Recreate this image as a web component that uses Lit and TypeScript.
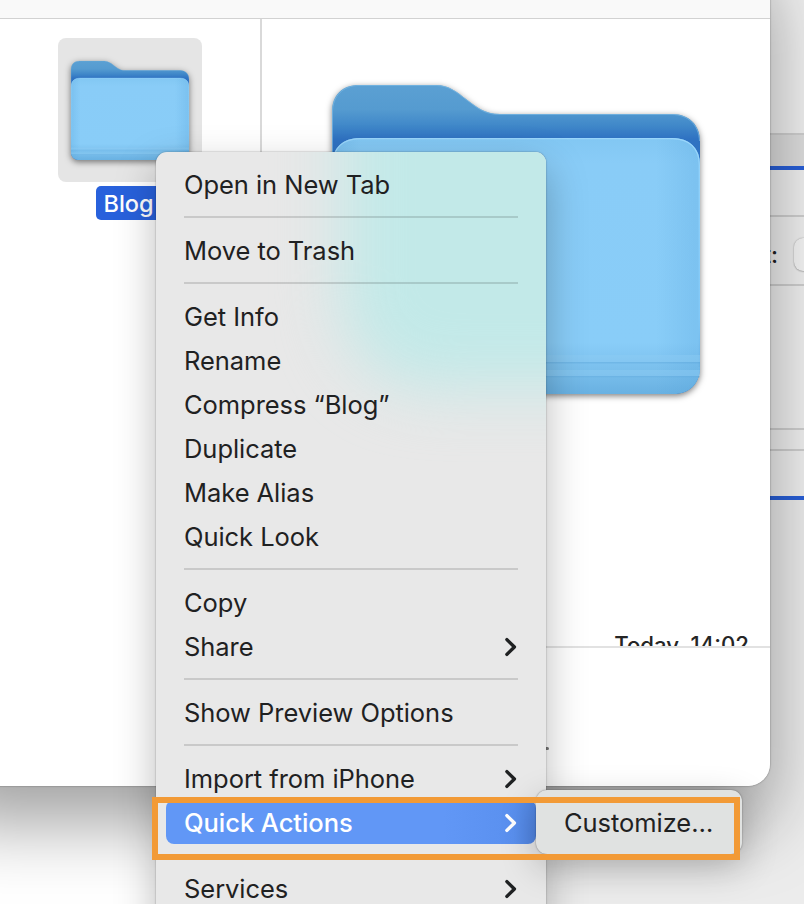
import { LitElement, html, svg, css } from "lit";
import { customElement, property } from "lit/decorators.js";

type Entry = { label: string; sub?: boolean; active?: boolean } | null;

const ENTRIES: Entry[] = [
  { label: "Open in New Tab" },
  null,
  { label: "Move to Trash" },
  null,
  { label: "Get Info" },
  { label: "Rename" },
  { label: "Compress “Blog”" },
  { label: "Duplicate" },
  { label: "Make Alias" },
  { label: "Quick Look" },
  null,
  { label: "Copy" },
  { label: "Share", sub: true },
  null,
  { label: "Show Preview Options" },
  null,
  { label: "Import from iPhone", sub: true },
  { label: "Quick Actions", sub: true, active: true },
  null,
  { label: "Services", sub: true },
];

@customElement("folder-icon")
export class FolderIcon extends LitElement {
  static styles = css`
    :host { display: block; }
    .art { display: block; width: 100%; height: auto; overflow: visible; filter: drop-shadow(0 2px 3px rgba(0, 0, 0, 0.5)); }
  `;
  render() {
    return html`<svg class="art" viewBox="0 0 368 309">
      <defs>
        <linearGradient id="back" x1="0" y1="0" x2="0" y2="54" gradientUnits="userSpaceOnUse">
          <stop offset="0" stop-color="#5ba0d3" />
          <stop offset="0.45" stop-color="#559bd0" />
          <stop offset="0.75" stop-color="#4088c9" />
          <stop offset="1" stop-color="#2f72c2" />
        </linearGradient>
        <linearGradient id="front" x1="0" y1="53" x2="0" y2="309" gradientUnits="userSpaceOnUse">
          <stop offset="0" stop-color="#82c7f3" />
          <stop offset="0.1" stop-color="#89ccf7" />
          <stop offset="0.8" stop-color="#89cdf8" />
          <stop offset="0.9" stop-color="#7bc0ed" />
          <stop offset="1" stop-color="#69b1e2" />
        </linearGradient>
        <linearGradient id="edge" x1="0" y1="0" x2="1" y2="0">
          <stop offset="0" stop-color="#4f9fd8" stop-opacity="0.25" />
          <stop offset="0.08" stop-color="#4f9fd8" stop-opacity="0" />
          <stop offset="0.88" stop-color="#4f9fd8" stop-opacity="0" />
          <stop offset="0.985" stop-color="#4f9fd8" stop-opacity="0.22" />
          <stop offset="1" stop-color="#4f9fd8" stop-opacity="0.22" />
        </linearGradient>
        <linearGradient id="rim" x1="0" y1="53" x2="0" y2="309" gradientUnits="userSpaceOnUse">
          <stop offset="0" stop-color="#9ad6fb" />
          <stop offset="0.7" stop-color="#82c9f8" />
          <stop offset="1" stop-color="#5da5d8" />
        </linearGradient>
      </defs>
      ${svg`
        <path fill="url(#back)" d="M0 27 C0 10 10 0 27 0 H104 C117 0 125 7 134 14 C145 22 152 29 168 29 H340 C357 29 368 40 368 56 V282 C368 299 357 309 341 309 H27 C10 309 0 299 0 282Z" />
        <path fill="none" stroke="#7ab9e4" stroke-width="1" stroke-opacity=".7" d="M.5 120 V27 C.5 11 11 .5 27 .5 H104 C117 .5 125 7.5 134 14.5 C145 22.5 152 29.5 168 29.5 H340 C356 29.5 367 40 367.5 56" />
        <path fill="url(#front)" d="M0 80 C0 63 11 53 28 53 H340 C357 53 368 63 368 80 V282 C368 299 357 309 341 309 H27 C10 309 0 299 0 282Z" />
        <path fill="url(#edge)" d="M0 80 C0 63 11 53 28 53 H340 C357 53 368 63 368 80 V282 C368 299 357 309 341 309 H27 C10 309 0 299 0 282Z" />
        <path fill="none" stroke="url(#rim)" stroke-width="1.2" d="M.7 282 V80 C.7 63 11 53.6 28 53.6 H340 C357 53.6 367.3 63 367.3 80 V282" />
        <rect y="270" width="368" height="7" fill="#8dcdf5" opacity=".45" />
        <rect y="277" width="368" height="1.4" fill="#5da6d9" opacity=".4" />
        <rect y="285" width="368" height="6" fill="#8dcdf5" opacity=".45" />
        <rect y="291" width="368" height="1.4" fill="#5da6d9" opacity=".3" />
      `}
    </svg>`;
  }
}

@customElement("context-menu")
export class ContextMenu extends LitElement {
  @property({ attribute: false }) entries: Entry[] = [];
  static styles = css`
    :host { display: block; padding: 10px; box-sizing: border-box; }
    .row {
      display: flex; align-items: center; justify-content: space-between;
      height: 44px; padding: 2px 18px 0; border-radius: 8px; box-sizing: border-box;
      font-size: 25.5px; font-weight: 440; letter-spacing: -0.05px; line-height: 42px; white-space: nowrap; color: #1f2122;
      position: relative;
    }
    .row.active { background: linear-gradient(90deg, #6197f6 75%, #5a90ef 94%, #5084e0); color: #fff; font-weight: 470; }
    .rule { height: 22px; display: flex; align-items: center; padding: 0 18px; position: relative; }
    .rule::before { content: ""; flex: 1; height: 2px; background: rgba(0, 0, 0, 0.135); }
    .chev { width: 14px; height: 22px; fill: none; stroke: currentColor; stroke-width: 3.4; stroke-linecap: round; stroke-linejoin: round; }
  `;
  render() {
    return this.entries.map((e) =>
      e === null
        ? html`<div class="rule"></div>`
        : html`<div class="row ${e.active ? "active" : ""}">
            <span>${e.label}</span>
            ${e.sub ? html`<svg class="chev" viewBox="0 0 14 22"><path d="M2.9 3.6 L10.4 11 L2.9 18.4" /></svg>` : null}
          </div>`
    );
  }
}

@customElement("app-root")
export class AppRoot extends LitElement {
  static styles = css`
    :host { display: block; font-family: Inter, "Liberation Sans", sans-serif; }
    .desktop {
      position: relative; width: 804px; height: 904px; overflow: hidden;
      background: linear-gradient(90deg, #fff 160px, #ececec 540px);
    }
    .behind { position: absolute; left: 700px; top: 0; width: 104px; display: flex; flex-direction: column; }
    .behind > div { box-sizing: border-box; border-bottom: 2px solid #cfcfcf; background: #f0f0f0; }
    .p1 { height: 135px; }
    .behind > .p2 { height: 35px; background: #dedede; border-bottom: 4px solid #285fd8; }
    .p3 { height: 47px; }
    .p4 { height: 69px; display: flex; align-items: center; padding-left: 65px; gap: 15.5px; font-size: 23px; color: #1f2122; }
    .pop { flex: none; width: 60px; height: 33px; margin-top: 8px; border-radius: 9px; background: #f6f6f6; box-shadow: 0 0 1.5px rgba(0, 0, 0, 0.35), 0 1px 1.5px rgba(0, 0, 0, 0.15); }
    .colon { width: 13px; display: flex; justify-content: flex-end; padding-top: 8px; font-weight: 500; }
    .p5 { height: 144px; }
    .p6 { height: 21px; }
    .behind > .p7 { height: 49px; border-bottom: 4px solid #285fd8; }
    .finder {
      position: absolute; left: -60px; top: -60px; width: 830px; height: 846px; box-sizing: border-box;
      border-radius: 22px; background: #fff; overflow: hidden; padding-left: 60px;
      display: flex; flex-direction: column;
    }
    .cast {
      position: absolute; left: -60px; top: -60px; width: 830px; height: 846px; border-radius: 22px;
      box-shadow: 0 0 1.5px 0 rgba(0, 0, 0, 0.6), 0 38px 72px rgba(0, 0, 0, 0.37);
    }
    .bar { flex: none; height: 79px; margin-left: -60px; box-sizing: border-box; background: #f9f9f9; border-bottom: 1px solid #d2d2d2; }
    .panes { flex: 1; display: flex; }
    .files { width: 260px; box-sizing: content-box; border-right: 2px solid #d9d9d9; }
    .tile { width: 144px; height: 144px; margin: 19px 0 0 58px; box-sizing: border-box; padding: 23px 13px 0 13px; border-radius: 8px; background: #e5e5e5; }
    .name { display: inline-block; margin: 4px 0 0 96px; height: 34px; width: 90px; padding: 1px 0 0 7.5px; box-sizing: border-box; border-radius: 5px; background: #2861dc; color: #fff; font-size: 23.5px; font-weight: 550; line-height: 34px; }
    .preview { flex: 1; display: flex; flex-direction: column; }
    .big { width: 368px; margin: 66px 0 0 70px; }
    .meta { height: 14px; margin-top: 238px; padding-right: 21px; overflow: hidden; text-align: right; font-size: 22.2px; font-weight: 540; line-height: 26px; color: #252525; }
    .foot { flex: 1; border-top: 2px solid #e2e2e2; padding: 82px 0 0 279px; }
    .dot { width: 8px; height: 3px; border-radius: 2px; background: #777; margin-top: 17px; }
    .menu {
      position: absolute; left: 156px; top: 152px; width: 390px; height: 780px; border-radius: 11px; overflow: hidden; background: #e8e8e8;
    }
    .menu-cast {
      position: absolute; left: 156px; top: 152px; width: 390px; height: 780px; border-radius: 11px;
      box-shadow: 0 0 1.5px 0 rgba(0, 0, 0, 0.5), 0 16px 42px rgba(0, 0, 0, 0.27);
    }
    .tint { position: absolute; left: 186px; top: -200px; width: 420px; height: 436px; border-radius: 90px; background: #c2e9e8; filter: blur(31px); }
    .submenu {
      position: absolute; left: 536px; top: 790px; width: 206px; height: 64px; border-radius: 11px; background: #e0e2e1;
      box-shadow: 0 0 1.5px 0 rgba(0, 0, 0, 0.5), 0 12px 36px rgba(0, 0, 0, 0.24);
    }
    .mark { position: absolute; left: 151.5px; top: 797px; width: 588.5px; height: 62.5px; box-sizing: border-box; border: 6px solid #f29a36; }
  `;
  render() {
    return html`<div class="desktop">
      <div class="behind">
        <div class="p1"></div>
        <div class="p2"></div>
        <div class="p3"></div>
        <div class="p4"><span class="colon"><span>t</span><span>:</span></span><span class="pop"></span></div>
        <div class="p5"></div>
        <div class="p6"></div>
        <div class="p7"></div>
      </div>
      <div class="cast"></div>
      <div class="finder">
        <div class="bar"></div>
        <div class="panes">
          <div class="files">
            <div class="tile"><folder-icon></folder-icon></div>
            <div class="name">Blog</div>
          </div>
          <div class="preview">
            <folder-icon class="big"></folder-icon>
            <div class="meta">Today, 14:02</div>
            <div class="foot"><div class="dot"></div></div>
          </div>
        </div>
      </div>
      <div class="menu-cast"></div>
      <div class="menu">
        <div class="tint"></div>
        <context-menu .entries=${ENTRIES}></context-menu>
      </div>
      <div class="submenu"><context-menu .entries=${[{ label: "Customize…" }]}></context-menu></div>
      <div class="mark"></div>
    </div>`;
  }
}
